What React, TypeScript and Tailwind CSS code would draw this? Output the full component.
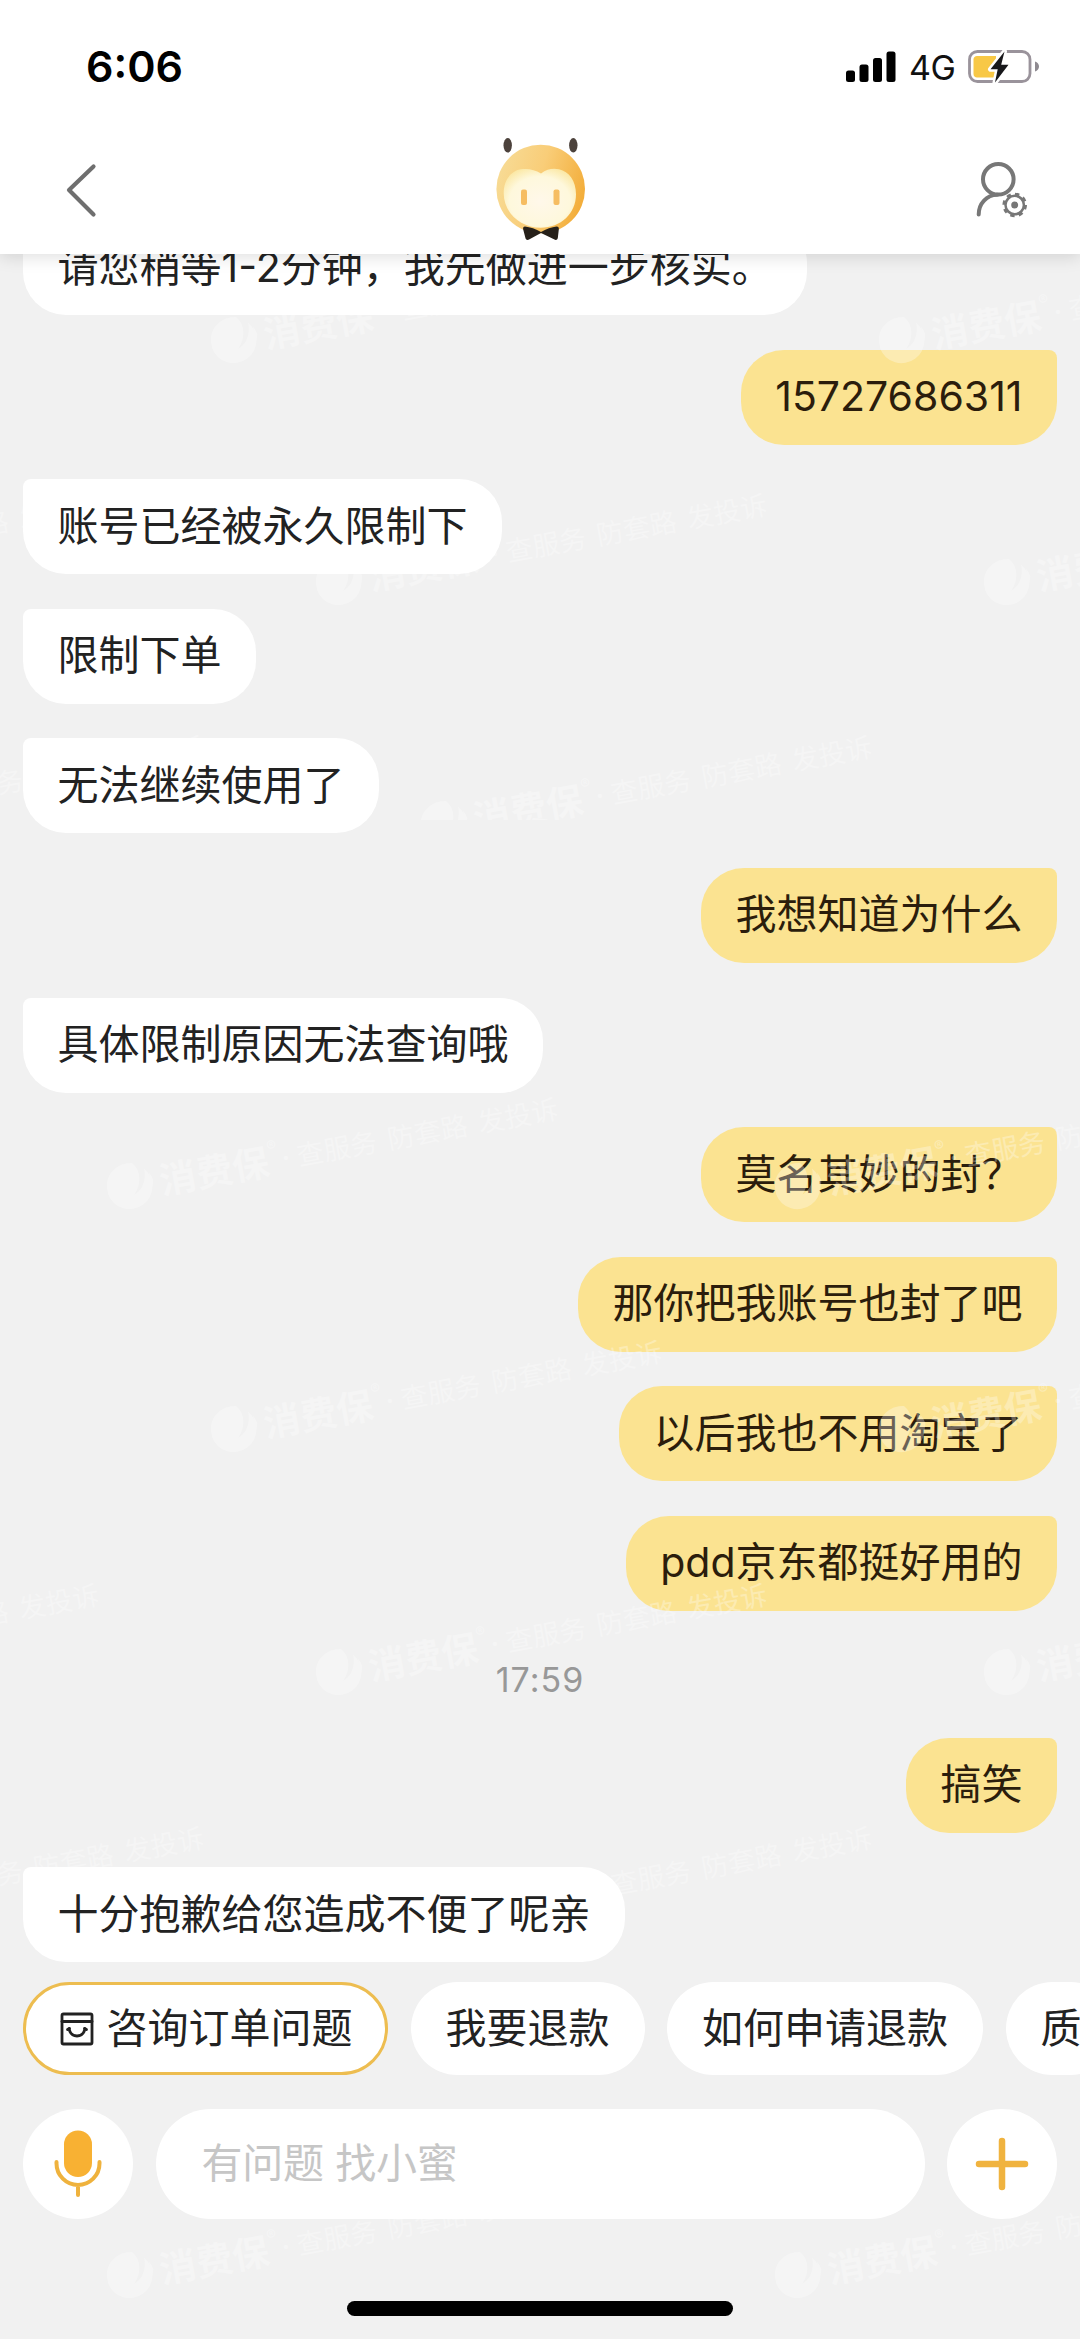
import React from "react";

type Message = {
  id: number;
  from: "agent" | "me" | "time";
  text: string;
};

const messages: Message[] = [
  { id: 1, from: "agent", text: "请您稍等1-2分钟，我先做进一步核实。" },
  { id: 2, from: "me", text: "15727686311" },
  { id: 3, from: "agent", text: "账号已经被永久限制下" },
  { id: 4, from: "agent", text: "限制下单" },
  { id: 5, from: "agent", text: "无法继续使用了" },
  { id: 6, from: "me", text: "我想知道为什么" },
  { id: 7, from: "agent", text: "具体限制原因无法查询哦" },
  { id: 8, from: "me", text: "莫名其妙的封？" },
  { id: 9, from: "me", text: "那你把我账号也封了吧" },
  { id: 10, from: "me", text: "以后我也不用淘宝了" },
  { id: 11, from: "me", text: "pdd京东都挺好用的" },
  { id: 12, from: "time", text: "17:59" },
  { id: 13, from: "me", text: "搞笑" },
  { id: 14, from: "agent", text: "十分抱歉给您造成不便了呢亲" },
];

const quickReplies = ["我要退款", "如何申请退款", "质"];

// centre of each watermark logo, grouped in bands; a band cuts off what runs below it
const bands = [
  { height: 820, marks: [[235, 340], [903, 340], [-328, 582], [340, 582], [1008, 582], [-223, 824], [445, 824]] },
  {
    height: 1915,
    marks: [[131, 1186], [799, 1186], [235, 1429], [903, 1429], [-328, 1672], [340, 1672], [1008, 1672], [-223, 1915], [445, 1915]],
  },
  { height: 2339, marks: [[131, 2275], [799, 2275]] },
];

const StatusBar: React.FC = () => (
  <div className="flex h-[133px] items-center justify-between pl-[86px] pr-[41px]">
    <span className="text-[43px] font-semibold leading-none text-black">6:06</span>
    <div className="flex items-center">
      <svg width="50" height="32" viewBox="0 0 50 32" fill="#000">
        <rect x="0" y="19.5" width="9" height="11.5" rx="2.5" />
        <rect x="13.5" y="13.5" width="9" height="17.5" rx="2.5" />
        <rect x="27" y="7" width="9" height="24" rx="2.5" />
        <rect x="40.5" y="0.5" width="9" height="30.5" rx="2.5" />
      </svg>
      <span className="ml-[13px] mt-[2px] w-[59px] whitespace-nowrap text-[34px] leading-none tracking-[-0.5px] text-[#111]">4G</span>
      <svg width="71" height="36" viewBox="0 0 71 36">
        <rect x="1.5" y="2.5" width="60.5" height="30" rx="8" fill="none" stroke="#9a939b" strokeWidth="2.8" />
        <path d="M67 12.500v10c2.600-.8 4-2.800 4-5s-1.400-4.200-4-5Z" fill="#8e8a90" />
        <path d="M9 7h19v21.500H9c-2 0-3.500-1.500-3.500-3.500V10.500c0-2 1.500-3.500 3.500-3.500Z" fill="#f8c846" />
        <path d="M36.500 2.500 22.500 20.200h7.200l-2.700 13.300 13.500-17.700h-7.300Z" fill="#17171a" stroke="#fff" strokeWidth="5" strokeLinejoin="round" />
        <path d="M36.500 2.500 22.500 20.200h7.200l-2.700 13.300 13.500-17.700h-7.300Z" fill="#17171a" />
      </svg>
    </div>
  </div>
);

const Mascot: React.FC = () => (
  <svg width="96" height="106" viewBox="492 135 96 106">
    <defs>
      <linearGradient id="head" x1="0" y1="0.2" x2="1" y2="0.5">
        <stop offset="0" stopColor="#f7dc97" />
        <stop offset="0.5" stopColor="#f9cd78" />
        <stop offset="1" stopColor="#f3ae3b" />
      </linearGradient>
      <radialGradient id="face" cx="0.5" cy="0.55" r="0.6">
        <stop offset="0" stopColor="#fff8ea" />
        <stop offset="0.7" stopColor="#fef8dc" />
        <stop offset="1" stopColor="#fbe9a8" />
      </radialGradient>
    </defs>
    <circle cx="540.700" cy="189" r="44.300" fill="url(#head)" />
    <path d="M541 173.500c6-4.500 12-5.500 18-4.200 10 2.200 17 11.500 17 25 0 19-15 33.500-35.300 33.500-20.700 0-37-15.500-37-34.500 0-13.500 7-22 17-24 7-1.200 14 .2 20.300 4.200Z" fill="url(#face)" />
    <rect x="521" y="189.500" width="6" height="15.500" rx="2" fill="#f6bd62" />
    <rect x="553.500" y="189.500" width="6" height="15.500" rx="2" fill="#f6bd62" />
    <ellipse cx="507.700" cy="145.300" rx="4.200" ry="7.300" fill="#4c423c" />
    <ellipse cx="573.300" cy="145.300" rx="4.200" ry="7.300" fill="#4c423c" />
    <path d="M525 226.500c5 .5 11 2.500 16 5.500 5-3 11-5 15.500-5.500 2 0 2.500 1 2.300 3l-1 8.500c-.4 2-2 2.500-3.800 1.300L541 233l-11.500 6.300c-2 1.200-3.400.7-4-1l-2.300-8.800c-.4-2 .3-3 1.800-3Z" fill="#262019" />
  </svg>
);

const NavBar: React.FC = () => (
  <div className="grid h-[121px] grid-cols-[1fr_96px_1fr] items-start pl-[64px] pr-[51px]">
    <svg className="mt-[29px]" width="54" height="56" viewBox="0 0 54 56" fill="none" stroke="#6f6f6f" strokeWidth="4.200" strokeLinecap="round" strokeLinejoin="round">
      <path d="M29.500 4.500 5 28l24.500 24.500" />
    </svg>
    <div className="-ml-[6.500px] mt-[2px]">
      <Mascot />
    </div>
    <svg className="mt-[27px] justify-self-end" width="54" height="60" viewBox="976 160 54 60" fill="none" stroke="#777" strokeWidth="4">
      <circle cx="999.300" cy="179.300" r="15.300" />
      <path d="M979.700 214.500c0-11 8-19.500 18.500-19.700" strokeLinecap="round" />
      <circle cx="1015.700" cy="205" r="9.200" strokeWidth="2.500" />
      <circle cx="1015.700" cy="205" r="10.900" strokeWidth="2.800" strokeDasharray="4.300 4.260" />
      <circle cx="1015.700" cy="205" r="3.500" fill="#777" stroke="none" />
    </svg>
  </div>
);

const Bubble: React.FC<{ message: Message }> = ({ message }) => {
  if (message.from === "time") {
    return (
      <div className="flex h-[57.400px] shrink-0 items-center justify-center pt-[12px] text-[34px] leading-none tracking-[1px] text-[#989898]">
        {message.text}
      </div>
    );
  }

  if (message.from === "me") {
    return (
      <div className="flex h-[95px] shrink-0 items-center self-end whitespace-nowrap rounded-[43px] rounded-tr-[8px] bg-[#fbe391] px-[34.500px] pb-px text-[41px] leading-none text-[#2b1d0c]">
        {message.text}
      </div>
    );
  }

  return (
    <div className="relative z-[6] flex h-[95px] shrink-0 items-center self-start whitespace-nowrap rounded-[43px] rounded-tl-[8px] bg-white px-[34.500px] pb-px text-[41px] leading-none text-[#222]">
      {message.text}
    </div>
  );
};

const Watermark: React.FC<{ x: number; y: number }> = ({ x, y }) => (
  <div
    className="absolute flex origin-[24px_24px] -rotate-[10.300deg] items-center whitespace-nowrap text-white opacity-30"
    style={{ left: x - 24, top: y - 24 }}
  >
    <svg width="48" height="48" viewBox="0 0 48 48">
      <path d="M24 1a23 23 0 0 1 5 .6C36 9 36 22 26 33c8-3 14-11 14-24a23 23 0 1 1-16-8Z" fill="#fff" />
      <path d="M44 14c1 10-5 20-16 24 11 0 18-8 19-16a23 23 0 0 0-3-8Z" fill="#fff" />
    </svg>
    <span className="ml-[5px] text-[37px] font-bold leading-none">消费保</span>
    <span className="-mt-[30px] text-[15px] leading-none">®</span>
    <span className="mx-[3px] text-[26px] font-bold leading-none">·</span>
    <span className="ml-[4px] flex gap-[11px] text-[27px] leading-none">
      <span>查服务</span>
      <span>防套路</span>
      <span>发投诉</span>
    </span>
  </div>
);

const QuickReplies: React.FC = () => (
  <div className="flex h-[93px] gap-[22.500px] overflow-hidden whitespace-nowrap pl-[23px] text-[41px] leading-none text-[#222]">
    <button className="flex w-[365px] shrink-0 items-center rounded-full border-[3px] border-[#edbd50] bg-white pl-[34px]">
      <svg className="mr-[12.500px] mt-[2px]" width="34" height="34" viewBox="0 0 34 34" fill="none" stroke="#222" strokeWidth="2.800" strokeLinejoin="round" strokeLinecap="round">
        <rect x="2" y="2" width="30" height="30" rx="1.500" />
        <path d="M2 9.500h30" />
        <path d="M9 16.500c1 5 4 7.500 8 7.500s7-2.500 8-7.500" />
        <path d="M7.500 17.500l2-1M24.500 16.500l2 1" />
      </svg>
      咨询订单问题
    </button>
    {quickReplies.map((item) => (
      <button key={item} className="flex shrink-0 items-center rounded-full bg-white px-[35px]">
        {item}
      </button>
    ))}
  </div>
);

const InputBar: React.FC = () => (
  <div className="mt-[34px] flex h-[110px] gap-[22.500px] px-[23px]">
    <button className="flex w-[110px] shrink-0 items-center justify-center rounded-full bg-white">
      <svg width="50" height="68" viewBox="0 0 50 68" fill="none">
        <rect x="11" y="0.500" width="28" height="46.500" rx="14" fill="#f8b133" />
        <path d="M3.500 32v1.500a21.500 21.500 0 0 0 43 0V32M25 56v9" stroke="#efb23d" strokeWidth="4" strokeLinecap="round" />
      </svg>
    </button>
    <div className="flex flex-1 items-center rounded-full bg-white pl-[46px] text-[41px] leading-none tracking-[-0.2px] text-[#c6c6c6]">
      有问题 找小蜜
    </div>
    <button className="flex w-[110px] shrink-0 items-center justify-center rounded-full bg-white">
      <svg width="54" height="54" viewBox="0 0 54 54" stroke="#f0b33f" strokeWidth="6.500" strokeLinecap="round">
        <path d="M27 4v46M4 27h46" />
      </svg>
    </button>
  </div>
);

const App: React.FC = () => {
  return (
    <div className="relative flex h-[2339px] w-[1080px] flex-col overflow-hidden bg-[#f1f1f1] font-[Inter,'Noto_Sans_CJK_SC',sans-serif]">
      {/* Header */}
      <header className="relative z-10 h-[254px] shrink-0 bg-white shadow-[0_3px_16px_rgba(0,0,0,0.13)]">
        <StatusBar />
        <NavBar />
      </header>

      {/* Conversation, scrolled under the header */}
      <main className="-mt-[34px] flex h-[1761.500px] shrink-0 flex-col gap-[34.600px] px-[23px]">
        {messages.map((message) => (
          <Bubble key={message.id} message={message} />
        ))}
      </main>

      {/* Footer */}
      <footer className="relative z-[6] shrink-0">
        <QuickReplies />
        <InputBar />
        <div className="mx-auto mt-[82px] h-[15px] w-[386px] rounded-full bg-black" />
      </footer>

      {bands.map((band) => (
        <div
          key={band.height}
          className="pointer-events-none absolute inset-x-0 top-0 z-[5] overflow-hidden"
          style={{ height: band.height }}
        >
          {band.marks.map(([x, y]) => (
            <Watermark key={`${x}-${y}`} x={x} y={y} />
          ))}
        </div>
      ))}
    </div>
  );
};

export default App;
